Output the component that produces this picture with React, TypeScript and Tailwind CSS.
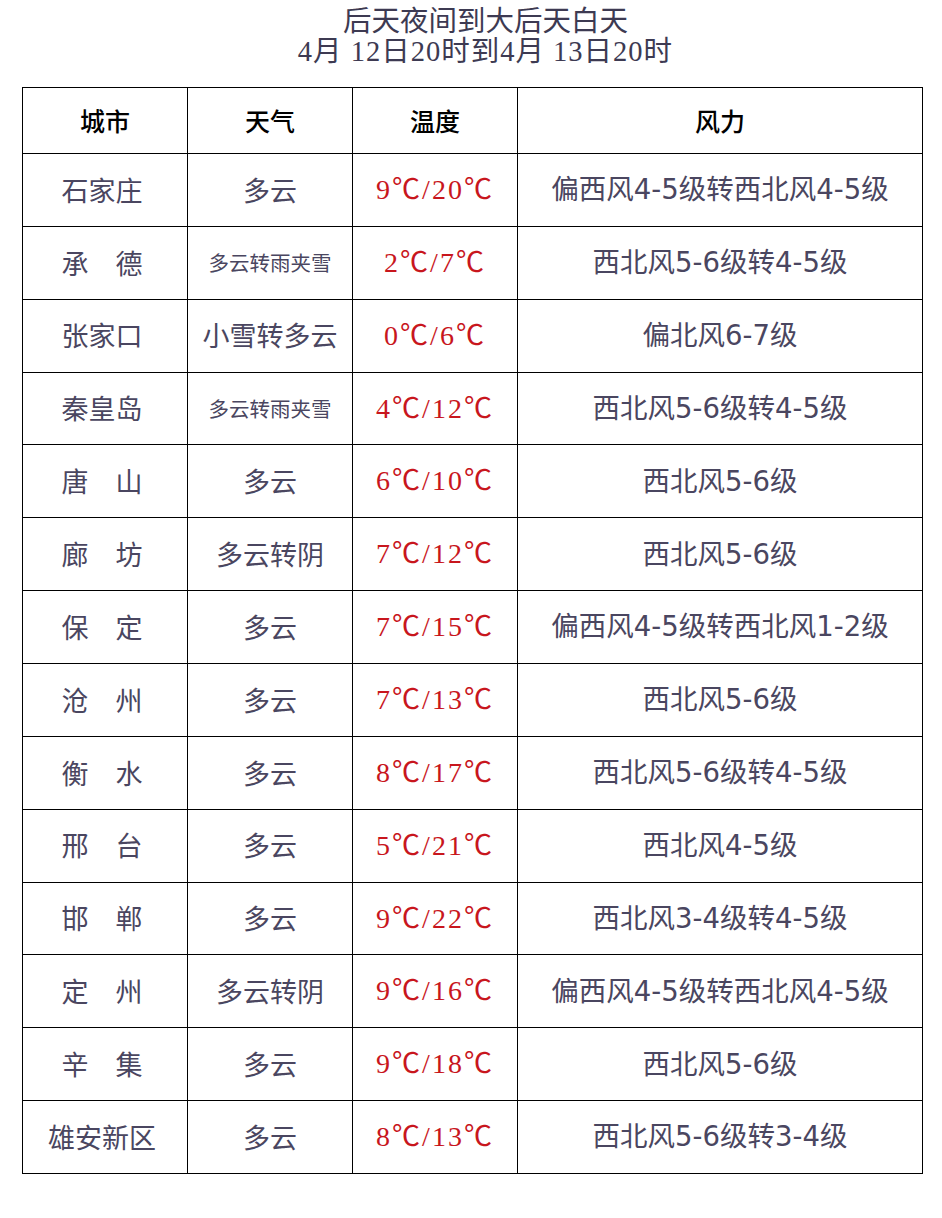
const rows = [
  { city: "石家庄", weather: "多云", temp: "9℃/20℃", wind: "偏西风4-5级转西北风4-5级" },
  { city: "承　德", weather: "多云转雨夹雪", temp: "2℃/7℃", wind: "西北风5-6级转4-5级", small: true },
  { city: "张家口", weather: "小雪转多云", temp: "0℃/6℃", wind: "偏北风6-7级" },
  { city: "秦皇岛", weather: "多云转雨夹雪", temp: "4℃/12℃", wind: "西北风5-6级转4-5级", small: true },
  { city: "唐　山", weather: "多云", temp: "6℃/10℃", wind: "西北风5-6级" },
  { city: "廊　坊", weather: "多云转阴", temp: "7℃/12℃", wind: "西北风5-6级" },
  { city: "保　定", weather: "多云", temp: "7℃/15℃", wind: "偏西风4-5级转西北风1-2级" },
  { city: "沧　州", weather: "多云", temp: "7℃/13℃", wind: "西北风5-6级" },
  { city: "衡　水", weather: "多云", temp: "8℃/17℃", wind: "西北风5-6级转4-5级" },
  { city: "邢　台", weather: "多云", temp: "5℃/21℃", wind: "西北风4-5级" },
  { city: "邯　郸", weather: "多云", temp: "9℃/22℃", wind: "西北风3-4级转4-5级" },
  { city: "定　州", weather: "多云转阴", temp: "9℃/16℃", wind: "偏西风4-5级转西北风4-5级" },
  { city: "辛　集", weather: "多云", temp: "9℃/18℃", wind: "西北风5-6级" },
  { city: "雄安新区", weather: "多云", temp: "8℃/13℃", wind: "西北风5-6级转3-4级" },
];

const cjk = "font-['Liberation_Serif','Noto_Sans_CJK_SC',serif]";
const cell = "border-[1.5px] border-black p-0 text-center align-middle";

export default function App() {
  return (
    <div className="w-[942px] h-[1218px] bg-white overflow-hidden">
      {/* ===== title ===== */}
      <div className={`pt-[7px] pl-[29px] text-center text-[28.5px] leading-[30px] text-[#3d3a52] ${cjk}`}>
        <div>后天夜间到大后天白天</div>
        <div className="tracking-[1px]">4月 12日20时到4月 13日20时</div>
      </div>

      {/* ===== table ===== */}
      <table className="ml-[22px] mt-[20px] w-[901px] border-collapse table-fixed">
        <colgroup>
          <col className="w-[165px]" />
          <col className="w-[165px]" />
          <col className="w-[165px]" />
          <col />
        </colgroup>
        <thead>
          <tr className="h-[66px]">
            {["城市", "天气", "温度", "风力"].map((h) => (
              <th
                key={h}
                className={`${cell} text-[25px] font-medium text-black font-['Noto_Sans_CJK_SC',sans-serif]`}
              >
                {h}
              </th>
            ))}
          </tr>
        </thead>
        <tbody>
          {rows.map((r) => (
            <tr key={r.city} className="h-[72.86px]">
              <td className={`${cell} pr-[6px] text-[27px] text-[#4a4660] font-['Noto_Sans_CJK_SC',sans-serif]`}>
                {r.city}
              </td>
              <td
                className={`${cell} text-[#4a4660] font-['Noto_Sans_CJK_SC',sans-serif] ${
                  r.small ? "text-[20.5px]" : "text-[27px]"
                }`}
              >
                {r.weather}
              </td>
              <td className={`${cell} text-[28px] tracking-[2px] text-[#c8161d] ${cjk}`}>
                {r.temp}
              </td>
              <td className={`${cell} text-[27.5px] text-[#4a4660] font-['DejaVu_Sans','Noto_Sans_CJK_SC',sans-serif]`}>
                {r.wind}
              </td>
            </tr>
          ))}
        </tbody>
      </table>
    </div>
  );
}
